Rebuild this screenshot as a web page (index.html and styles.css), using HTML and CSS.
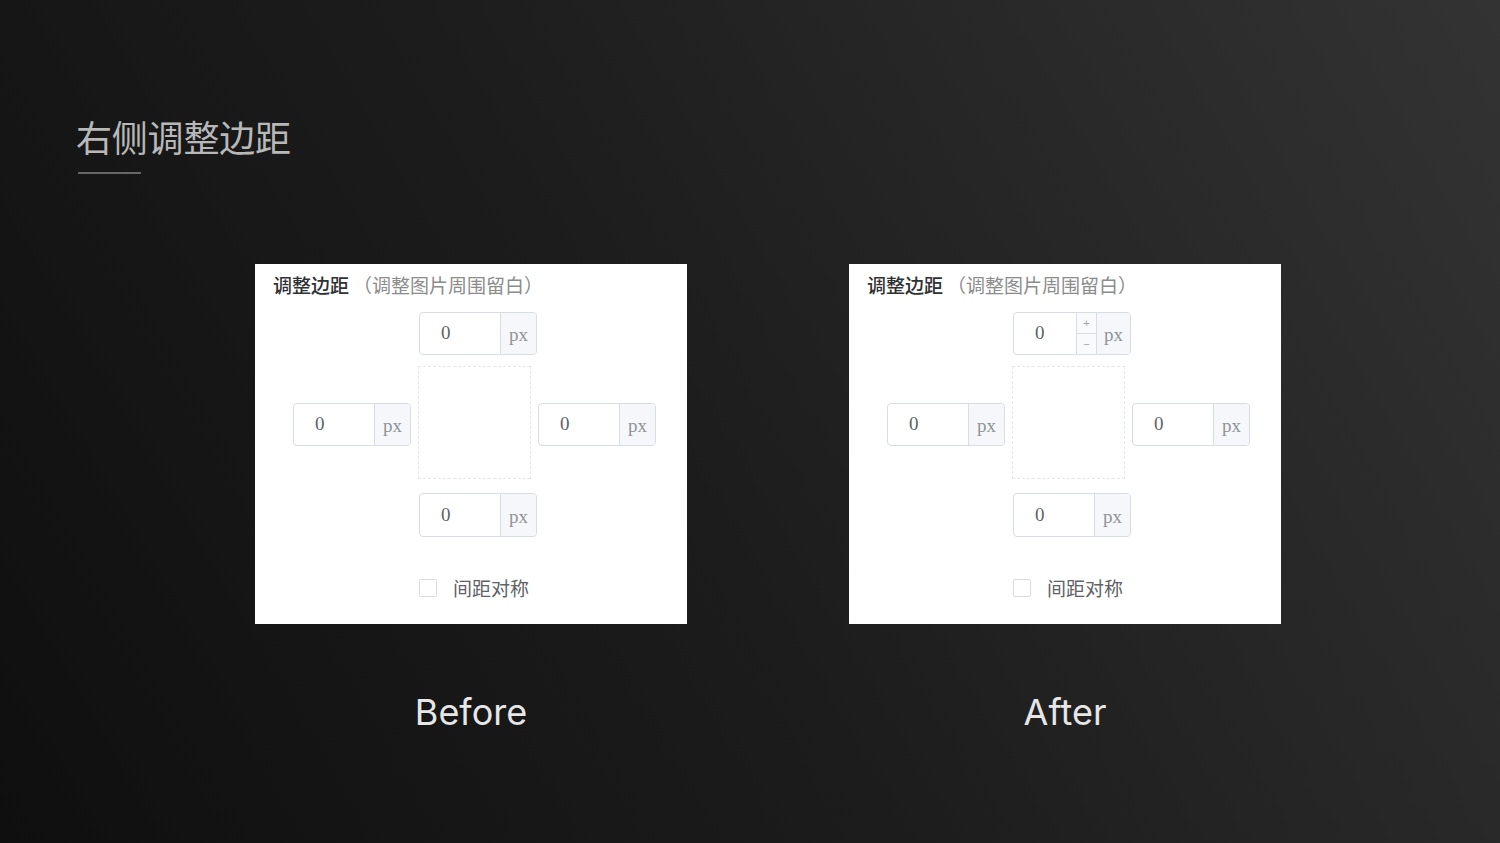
FILE: index.html
```html
<!DOCTYPE html>
<html lang="zh-CN">
<head>
<meta charset="utf-8">
<title>右侧调整边距</title>
<link rel="stylesheet" href="styles.css">
</head>
<body>
<div class="page">
  <header class="title-block">
    <h1 class="title">右侧调整边距</h1>
    <div class="rule"></div>
  </header>
  <main class="compare">
    <section class="col">
      <div class="panel">
        <div class="panel-head"><span class="head-main">调整边距</span><span class="head-sub">（调整图片周围留白）</span></div>
        <div class="grid">
          <div class="num pos-top"><span class="val">0</span><span class="unit">px</span></div>
          <div class="num pos-left"><span class="val">0</span><span class="unit">px</span></div>
          <div class="dashed"></div>
          <div class="num pos-right"><span class="val">0</span><span class="unit">px</span></div>
          <div class="num pos-bottom"><span class="val">0</span><span class="unit">px</span></div>
        </div>
        <label class="check-row"><span class="box"></span><span class="check-text">间距对称</span></label>
      </div>
      <div class="caption">Before</div>
    </section>
    <section class="col">
      <div class="panel">
        <div class="panel-head"><span class="head-main">调整边距</span><span class="head-sub">（调整图片周围留白）</span></div>
        <div class="grid">
          <div class="num pos-top"><span class="val">0</span><span class="step"><span class="step-btn">+</span><span class="step-btn minus">−</span></span><span class="unit unit-narrow">px</span></div>
          <div class="num pos-left"><span class="val">0</span><span class="unit">px</span></div>
          <div class="dashed"></div>
          <div class="num pos-right"><span class="val">0</span><span class="unit">px</span></div>
          <div class="num pos-bottom"><span class="val">0</span><span class="unit">px</span></div>
        </div>
        <label class="check-row"><span class="box"></span><span class="check-text">间距对称</span></label>
      </div>
      <div class="caption">After</div>
    </section>
  </main>
</div>
</body>
</html>
```
FILE: styles.css
```css
html, body {
  margin: 0;
  padding: 0;
  width: 1500px;
  height: 843px;
  overflow: hidden;
}
body {
  background: linear-gradient(60deg, #0f0f0f 0%, #1c1c1c 45%, #333333 100%);
  font-family: "Noto Sans CJK SC", "Noto Sans", sans-serif;
}
.page {
  box-sizing: border-box;
  height: 843px;
  padding-top: 114px;
}
.title-block {
  padding-left: 76px;
}
.title {
  margin: 0;
  font-size: 36px;
  line-height: 44px;
  font-weight: 400;
  color: #b8b8b8;
  letter-spacing: -0.2px;
}
.rule {
  margin-top: 14px;
  margin-left: 2px;
  width: 63px;
  height: 2px;
  background: #666666;
}
.compare {
  display: flex;
  gap: 162px;
  padding-left: 255px;
  margin-top: 90px;
}
.col {
  width: 432px;
  display: flex;
  flex-direction: column;
}
.panel {
  box-sizing: border-box;
  width: 432px;
  height: 360px;
  background: #ffffff;
  padding-top: 10px;
}
.panel-head {
  padding-left: 18px;
  font-size: 19px;
  line-height: 22px;
  white-space: nowrap;
}
.head-main {
  color: #303133;
  font-weight: 500;
}
.head-sub {
  color: #8c8c8c;
  margin-left: 4px;
}
.grid {
  margin: 16px 0 0 38px;
  display: grid;
  grid-template-columns: 125px 120px 118px;
  grid-template-rows: 43px 113px 47px;
  row-gap: 11px;
}
.num {
  box-sizing: border-box;
  display: flex;
  width: 118px;
  height: 43px;
  border: 1px solid #d8dce5;
  border-radius: 4px;
  overflow: hidden;
  background: #fff;
  font-family: "Liberation Serif", "Noto Sans CJK SC", serif;
  font-size: 19px;
}
.pos-top { grid-row: 1; grid-column: 2; margin-left: 1px; }
.pos-left { grid-row: 2; grid-column: 1; margin-top: 37px; }
.pos-right { grid-row: 2; grid-column: 3; margin-top: 37px; }
.pos-bottom { grid-row: 3; grid-column: 2; margin-left: 1px; align-self: end; height: 44px; }
.dashed {
  grid-row: 2;
  grid-column: 2;
  box-sizing: border-box;
  width: 113px;
  height: 113px;
  border: 1px dashed #e4e7ed;
}
.val {
  flex: 1;
  display: flex;
  align-items: center;
  padding-left: 21px;
  color: #606266;
  padding-bottom: 1px;
}
.unit {
  box-sizing: border-box;
  width: 36px;
  display: flex;
  align-items: center;
  justify-content: center;
  background: #f5f7fa;
  border-left: 1px solid #d8dce5;
  color: #909399;
  padding-top: 3px;
}
.unit-narrow {
  width: 34px;
}
.step {
  box-sizing: border-box;
  width: 20px;
  display: flex;
  flex-direction: column;
  border-left: 1px solid #d8dce5;
  background: #f9fafc;
}
.step-btn {
  flex: 1;
  display: flex;
  align-items: center;
  justify-content: center;
  font-family: "Liberation Sans", sans-serif;
  font-size: 11px;
  color: #a0a3a8;
}
.step-btn.minus {
  border-top: 1px solid #d8dce5;
}
.check-row {
  display: flex;
  align-items: center;
  margin: 42px 0 0 164px;
  height: 18px;
}
.box {
  box-sizing: border-box;
  width: 18px;
  height: 18px;
  border: 1px solid #d8dce5;
  border-radius: 2px;
  background: #fff;
}
.check-text {
  margin-left: 16px;
  font-size: 19px;
  line-height: 22px;
  color: #606266;
}
.caption {
  margin-top: 67px;
  text-align: center;
  font-family: "Inter", "Liberation Sans", sans-serif;
  font-size: 36px;
  line-height: 42px;
  font-weight: 400;
  color: #e6e6e6;
}
```
